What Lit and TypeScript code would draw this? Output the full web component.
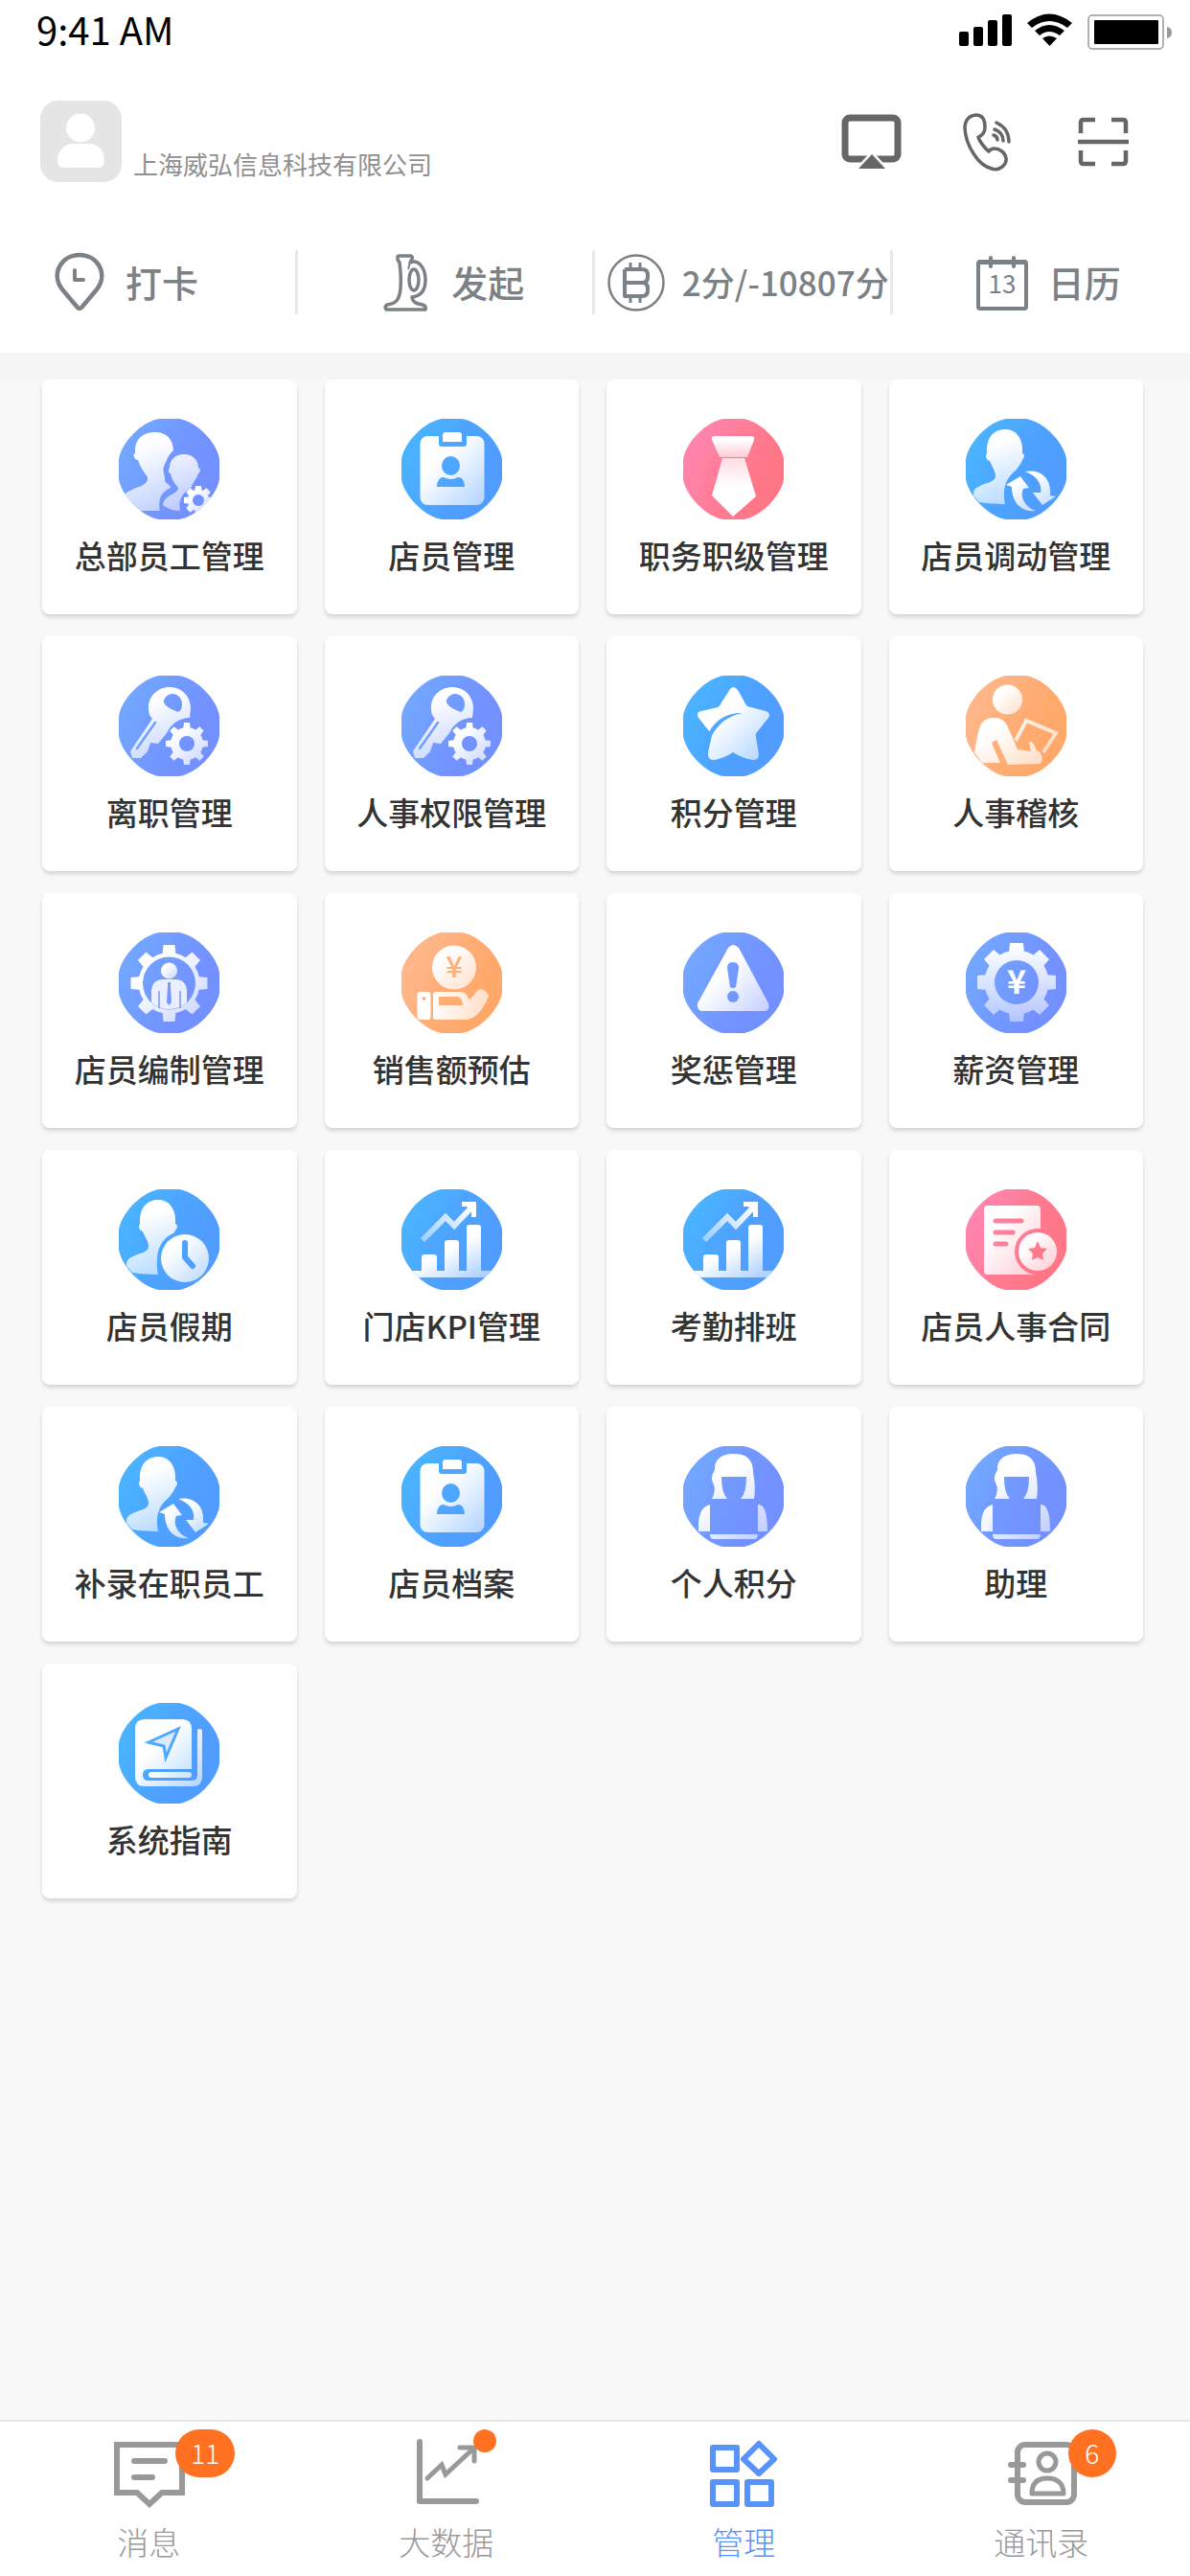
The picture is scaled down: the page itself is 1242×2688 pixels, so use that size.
import { LitElement, html, svg, css, nothing, type SVGTemplateResult } from "lit";
import { customElement, property } from "lit/decorators.js";

type Tone = "sky" | "indigo" | "pink" | "orange";
type Glyph =
  | "team" | "badge" | "tie" | "transfer" | "key" | "star" | "audit" | "staffing"
  | "coinHand" | "warning" | "payGear" | "leave" | "chart" | "contract" | "assistant" | "guide";

const TONES: Record<Tone, [string, string]> = {
  sky: ["#4ab2ff", "#509dff"],
  indigo: ["#72a6ff", "#7390ff"],
  pink: ["#ff85ad", "#ff7687"],
  orange: ["#ffb78a", "#ffa86b"],
};

/** Outline of a cog wheel centred on (cx, cy): a disc of radius `body` plus its teeth, as one path. */
function cog(cx: number, cy: number, body: number, tip: number, halfWidth: number, teeth = 8): string {
  const root = body - 3;
  let d = `M${cx - body} ${cy}A${body} ${body} 0 0 1 ${cx + body} ${cy}A${body} ${body} 0 0 1 ${cx - body} ${cy}Z`;
  for (let i = 0; i < teeth; i++) {
    const a = (i * 2 * Math.PI) / teeth - Math.PI / 2;
    const corners: [number, number][] = [
      [root, -halfWidth], [tip, -halfWidth + 1], [tip, halfWidth - 1], [root, halfWidth],
    ];
    const points = corners.map(([r, t]) => {
      const x = cx + r * Math.cos(a) - t * Math.sin(a);
      const y = cy + r * Math.sin(a) + t * Math.cos(a);
      return `${x.toFixed(2)} ${y.toFixed(2)}`;
    });
    d += `M${points.join("L")}Z`;
  }
  return d;
}

const person = svg`<path fill="url(#fg)" d="M41 11C52 11 58 19 59 30L59 36C62 37 61 41 59 43C57 48 54 51 52 54C44 60 37 71 41 89C31 89 20 88 14 87L8 80C8 75 9 73 13 71C21 66 31 67 31 59C31 55 28 51 25 44C21 43 20 38 22 36C21 21 28 11 41 11Z"/>`;

const GLYPHS: Record<Glyph, SVGTemplateResult> = {
  team: svg`
    <path fill="url(#fg)" d="M38 14C50 14 57 22 57 33C51 38 49 46 47 50C45 55 49 60 48 65C50 68 54 69 54 72C46 76 40 82 43 96L21 96L5 80C14 70 31 72 30 61C26 55 22 50 20 43C16 43 14 37 17 36C16 22 24 14 38 14Z"/>
    <path fill="url(#fg)" d="M68 37C77 37 83 43 83 51C86 52 85 56 83 57C81 63 77 67 76 71C69 76 61 83 64 96C57 96 51 94 46 90C47 79 62 79 62 72C58 67 55 63 54 57C52 57 51 53 53 51C53 43 59 37 68 37Z"/>
    <path fill="url(#own)" d=${cog(83, 85, 11, 15, 4)} />
    <circle cx="83" cy="85" r="6" fill="url(#bg)"/>`,
  badge: svg`
    <rect x="19.500" y="18" width="67" height="72" rx="8" fill="url(#fgDiag)"/>
    <path fill="url(#bg)" d="M39 16H68V26Q68 29 65 29H42Q39 29 39 26Z"/>
    <path fill="#fff" d="M43 24V17Q43 14 46 14H60Q63 14 63 17V24Z"/>
    <ellipse cx="51.500" cy="49" rx="9.500" ry="10" fill="url(#bg)"/>
    <path fill="url(#bg)" d="M37 71C37 66 39 61 44 61Q52 65 59 61C64 61 66 66 66 71Z"/>`,
  tie: svg`
    <path fill="url(#knot)" d="M33 18H71Q75 18 74 22L67 40H38L30 22Q29 18 33 18Z"/>
    <path fill="url(#blade)" d="M41 41H64L76 81L52 102L30 80Z"/>`,
  transfer: svg`${person}
    <path fill="url(#own)" d="M57 60L66 72L60 73C56 82 62 92 73 96C59 98 48 88 48 71L42 69Z"/>
    <path fill="url(#own)" d="M62 55C78 52 90 62 88 80L94 81L80 90L70 77L78 77C80 67 73 59 62 55Z"/>`,
  key: svg`
    <path fill="url(#fg)" d="M53 12C66 12 75 22 75 34L74 44C63 44 54 51 50 60L41 71L33 70L30 79L23 86L14 86L12 79L35 45C31 41 31 37 31 33C31 21 41 12 53 12Z"/>
    <path fill="url(#bg)" d="M47 26C48 22 52 19 56 19C62 19 66 24 66 30Q66 36 62 38C59 37 46 32 47 26Z"/>
    <path stroke="url(#bg)" stroke-width="2.500" stroke-linecap="round" d="M38 49L19 76"/>
    <path fill="url(#own)" d=${cog(71, 71, 17, 22, 4)} />
    <circle cx="71" cy="71" r="8" fill="url(#bg)"/>`,
  star: svg`
    <path fill="url(#fgDiag)" d="M49 14Q52 10 56 14C61 20 63 27 67 32L86 37Q92 39 89 44L77 59Q75 61 76 64L79 82Q79 88 73 88Q61 86 52 80Q43 86 32 88Q26 88 26 82C27 71 32 62 28 59L16 44Q13 38 19 37L36 33Q39 31 40 28Z"/>
    <path fill="url(#bg)" d="M62 39C46 38 33 47 27 59L28 67C34 52 46 42 62 39Z"/>`,
  audit: svg`
    <circle cx="43.500" cy="25" r="15.500" fill="url(#own)"/>
    <path fill="none" stroke="url(#fg)" stroke-width="4" d="M52 68L63 47L94 60L81 80"/>
    <path fill="url(#own)" d="M9 80C11 70 12 59 15 53C18 46 23 44 29 44C38 44 42 48 45 56L54 77L68 79C68 76 65 71 67 69C72 69 72 76 74 78C82 81 80 91 77 92L44 93L32 67L27 70L36 91H17Z"/>`,
  staffing: svg`
    <path fill="url(#own)" d=${cog(52.5, 53, 32, 40, 7)} />
    <circle cx="52.500" cy="53" r="27.500" fill="url(#bg)"/>
    <circle cx="52.500" cy="40" r="8.500" fill="url(#own)"/>
    <path fill="#fff" fill-opacity="0.850" d="M34 73V61Q35 49 46 49H59Q70 49 71 61V73Q64 80 52 80Q41 80 34 73Z"/>
    <path stroke="url(#bg)" stroke-width="1.500" d="M42 61V79M64 61V79"/>
    <path fill="url(#bg)" d="M51 52H54L54 56L55 73L52.500 76L50 73L51 56Z"/>`,
  coinHand: svg`
    <circle cx="55" cy="36.500" r="23" fill="url(#own)"/>
    <text x="55" y="47" class="yen" font-size="31" fill="#ffb07a">¥</text>
    <rect x="16.500" y="62" width="14" height="29" rx="3" fill="#fff"/>
    <circle cx="23.500" cy="69" r="2" fill="url(#bg)"/>
    <path fill="url(#fgSide)" d="M33 65Q33 62 36 62H62Q68 62 70 70C76 68 77 60 83 59Q90 61 91 67C87 76 79 91 67 91H36Q33 91 33 88Z"/>
    <path fill="url(#bg)" d="M39 67H58Q64 68 64 76H39Z"/>`,
  warning: svg`
    <path fill="url(#fgDiag)" d="M47 16Q52 10 58 16L89 74Q91 81 85 82H20Q14 81 15 74Z"/>
    <path fill="url(#bg)" d="M46 37Q46 31 52 31Q58 31 58 37L55 57Q52 59 49 57Z"/>
    <circle cx="52" cy="67" r="6" fill="url(#bg)"/>`,
  payGear: svg`
    <path fill="url(#fgDown)" d=${cog(53, 52, 33.5, 41, 8)} />
    <circle cx="53" cy="52" r="23" fill="url(#bg)"/>
    <text x="53" y="64" class="yen bold" font-size="34" fill="#fff">¥</text>`,
  leave: svg`${person}
    <circle cx="69" cy="72" r="29" fill="url(#bg)"/>
    <circle cx="69" cy="72" r="25" fill="url(#own)"/>
    <path fill="none" stroke="url(#bg)" stroke-width="6" stroke-linecap="round" stroke-linejoin="round" d="M69 56V71L77 80"/>`,
  chart: svg`
    <path fill="none" stroke="url(#trend)" stroke-width="6" d="M22 53L46 29L55 38L74 18"/>
    <path fill="#fff" d="M63 13H78V29H73V24L68 18H63Z"/>
    <path fill="url(#bar)" d="M10 85H21V71Q21 68 24 68H34Q37 68 37 71V85H45V56Q45 53 48 53H57Q60 53 60 56V85H68V40Q68 37 71 37H80Q83 37 83 40V85H95L88 92H17Z"/>`,
  contract: svg`
    <rect x="19" y="17" width="59" height="72" rx="4" fill="url(#own)"/>
    <path stroke="url(#bg)" stroke-width="5" stroke-linecap="round" d="M31 33H58M31 45H49M31 57H42"/>
    <circle cx="75" cy="65" r="24" fill="url(#bg)"/>
    <circle cx="75" cy="65" r="20" fill="url(#own)"/>
    <path fill="url(#bg)" d="M75 54L78 61L85 62L80 67L81 74L75 71L69 74L70 67L65 62L72 61Z"/>`,
  assistant: svg`
    <path fill="url(#hair)" d="M53 8C67 8 73 15 73 27Q76 42 74 55H60Q66 49 66 32H40Q40 49 46 55H30Q35 46 31 38Q28 32 33 25C32 14 41 8 53 8Z"/>
    <path fill="url(#fgDiag)" d="M28 61V89H16C16 77 16 64 28 61ZM78 61Q88 60 88 89H78ZM28 92H78Q78 97 74 97H32Q28 97 28 92Z"/>`,
  guide: svg`
    <path fill="url(#fgDiag)" d="M27 17H66Q76 17 76 27V69H31Q25 69 25 75Q25 81 31 81H76Q82 81 82 75V29Q82 27 84 27Q87 27 87 29V77Q87 87 77 87H27Q17 87 17 77V27Q17 17 27 17Z"/>
    <rect x="31" y="72" width="45" height="6" rx="3" fill="url(#fgSide)"/>
    <path fill="#dcebff" stroke="url(#bg)" stroke-width="3" d="M31 41L62 27L49 57L47 45Z"/>`,
};

@customElement("tile-icon")
export class TileIcon extends LitElement {
  static styles = css`
    :host { display: block; width: 105px; height: 105px; }
    .art { display: block; width: 100%; height: 100%; }
    .yen { font-family: "Noto Sans CJK SC", sans-serif; text-anchor: middle; }
    .bold { font-weight: 700; }
  `;

  @property() tone: Tone = "sky";
  @property() glyph: Glyph = "team";

  render() {
    const [from, to] = TONES[this.tone];
    return html`
      <svg class="art" viewBox="0 0 105 105" fill="none" aria-hidden="true">
        <defs>
          <linearGradient id="bg" gradientUnits="userSpaceOnUse" x1="10" y1="30" x2="85" y2="65">
            <stop offset="0" stop-color=${from} /><stop offset="1" stop-color=${to} />
          </linearGradient>
          <linearGradient id="fg" gradientUnits="userSpaceOnUse" x1="35" y1="25" x2="60" y2="100">
            <stop offset="0" stop-color="#fff" /><stop offset="1" stop-color="#fff" stop-opacity="0.500" />
          </linearGradient>
          <linearGradient id="own" x1="0.300" y1="0.250" x2="1" y2="1">
            <stop offset="0" stop-color="#fff" /><stop offset="1" stop-color="#fff" stop-opacity="0.600" />
          </linearGradient>
          <linearGradient id="fgDiag" gradientUnits="userSpaceOnUse" x1="42" y1="42" x2="88" y2="90">
            <stop offset="0" stop-color="#fff" /><stop offset="1" stop-color="#fff" stop-opacity="0.550" />
          </linearGradient>
          <linearGradient id="fgDown" gradientUnits="userSpaceOnUse" x1="52" y1="12" x2="52" y2="95">
            <stop offset="0" stop-color="#fff" /><stop offset="1" stop-color="#fff" stop-opacity="0.450" />
          </linearGradient>
          <linearGradient id="fgSide" gradientUnits="userSpaceOnUse" x1="32" y1="62" x2="95" y2="75">
            <stop offset="0" stop-color="#fff" /><stop offset="1" stop-color="#fff" stop-opacity="0.600" />
          </linearGradient>
          <linearGradient id="knot" x1="0" y1="0" x2="0" y2="1">
            <stop offset="0.200" stop-color="#fff" /><stop offset="1" stop-color="#fff" stop-opacity="0.600" />
          </linearGradient>
          <linearGradient id="blade" x1="0" y1="0" x2="0" y2="1">
            <stop offset="0" stop-color="#fff" stop-opacity="0.750" /><stop offset="0.500" stop-color="#fff" />
          </linearGradient>
          <linearGradient id="trend" gradientUnits="userSpaceOnUse" x1="22" y1="53" x2="74" y2="18">
            <stop offset="0" stop-color="#fff" stop-opacity="0.450" /><stop offset="1" stop-color="#fff" />
          </linearGradient>
          <linearGradient id="bar" gradientUnits="userSpaceOnUse" x1="40" y1="50" x2="66" y2="98">
            <stop offset="0.300" stop-color="#fff" /><stop offset="1" stop-color="#fff" stop-opacity="0.550" />
          </linearGradient>
          <linearGradient id="hair" gradientUnits="userSpaceOnUse" x1="50" y1="25" x2="64" y2="58">
            <stop offset="0" stop-color="#fff" /><stop offset="1" stop-color="#fff" stop-opacity="0.800" />
          </linearGradient>
          <clipPath id="disc">
            <path d="M42 0H63C81 3 102 24 105 42V63C102 81 81 102 63 105H42C24 102 3 81 0 63V42C3 24 24 3 42 0Z" />
          </clipPath>
        </defs>
        <g clip-path="url(#disc)">
          <rect width="105" height="105" fill="url(#bg)" />
          <circle cx="104" cy="76" r="82" fill=${to} fill-opacity="0.200" />
          ${GLYPHS[this.glyph]}
        </g>
      </svg>`;
  }
}

interface Tile { label: string; tone: Tone; glyph: Glyph; }

const TILES: Tile[] = [
  { label: "总部员工管理", tone: "indigo", glyph: "team" },
  { label: "店员管理", tone: "sky", glyph: "badge" },
  { label: "职务职级管理", tone: "pink", glyph: "tie" },
  { label: "店员调动管理", tone: "sky", glyph: "transfer" },
  { label: "离职管理", tone: "indigo", glyph: "key" },
  { label: "人事权限管理", tone: "indigo", glyph: "key" },
  { label: "积分管理", tone: "sky", glyph: "star" },
  { label: "人事稽核", tone: "orange", glyph: "audit" },
  { label: "店员编制管理", tone: "indigo", glyph: "staffing" },
  { label: "销售额预估", tone: "orange", glyph: "coinHand" },
  { label: "奖惩管理", tone: "indigo", glyph: "warning" },
  { label: "薪资管理", tone: "indigo", glyph: "payGear" },
  { label: "店员假期", tone: "sky", glyph: "leave" },
  { label: "门店KPI管理", tone: "sky", glyph: "chart" },
  { label: "考勤排班", tone: "sky", glyph: "chart" },
  { label: "店员人事合同", tone: "pink", glyph: "contract" },
  { label: "补录在职员工", tone: "sky", glyph: "transfer" },
  { label: "店员档案", tone: "sky", glyph: "badge" },
  { label: "个人积分", tone: "indigo", glyph: "assistant" },
  { label: "助理", tone: "indigo", glyph: "assistant" },
  { label: "系统指南", tone: "sky", glyph: "guide" },
];

const QUICK: { label: string; art: SVGTemplateResult }[] = [
  {
    label: "打卡",
    art: svg`<path stroke-width="4.500" stroke-linejoin="round" d="M28 56L12 37C-1 20 12 1 30 1S61 20 48 37L32 56Q30 58 28 56Z"/>
      <path stroke-width="4" stroke-linecap="round" stroke-linejoin="round" d="M25 17V27H34"/>`,
  },
  {
    label: "发起",
    art: svg`<path stroke-width="3.500" stroke-linejoin="round" d="M22 3Q22 2 24 2H36Q38 3 37 5L35 9C44 5 51 15 51 27C51 38 46 44 37 45C38 51 42 52 48 53Q52 54 51 58H10Q8 55 11 53C20 52 24 48 25 36C26 25 25 17 24 9L22 6Z"/>
      <ellipse cx="39" cy="27" rx="5" ry="11" stroke-width="3.500"/>
      <path stroke-width="2" d="M35 9L33 16"/>`,
  },
  {
    label: "2分/-10807分",
    art: svg`<circle cx="30" cy="30" r="28.500" stroke-width="2.500"/>
      <path stroke-width="4" stroke-linejoin="round" d="M18 16H36Q42 16 42 22V24Q42 30 36 30H18M36 30Q42 30 42 36V38Q42 44 36 44H18V16"/>
      <path stroke-width="3" d="M24 9V16M34 9V16M24 44V51M34 44V51"/>`,
  },
  {
    label: "日历",
    art: svg`<rect x="5" y="8" width="50" height="49" rx="2" stroke-width="4"/>
      <path stroke-width="5" d="M5 8.500H55"/>
      <path stroke-width="4" stroke-linecap="round" d="M18 4V13M42 4V13"/>
      <text class="day" x="30" y="41">13</text>`,
  },
];

interface Tab { label: string; badge?: string; dot?: boolean; active?: boolean; art: SVGTemplateResult; }

const TABS: Tab[] = [
  {
    label: "消息", badge: "11",
    art: svg`<path stroke-width="6" d="M3 6H71V56H50L37 68L24 56H3Z"/>
      <path stroke-width="6" stroke-linecap="round" d="M21 23H53M21 40H40"/>`,
  },
  {
    label: "大数据", dot: true,
    art: svg`<path stroke-width="6" stroke-linecap="round" stroke-linejoin="round" d="M8 3V65H67"/>
      <path stroke-width="5" stroke-linecap="round" d="M16 41L31 27L35 37L63 11M50 9H65V23"/>`,
  },
  {
    label: "管理", active: true,
    art: svg`<path stroke-width="6" stroke-linejoin="round" d="M4 9H29V32H4ZM4 45H29V68H4ZM40 45H65V68H40ZM52 5L68 21L52 36L36 21Z"/>`,
  },
  {
    label: "通讯录", badge: "6",
    art: svg`<rect x="11" y="6" width="59" height="60" rx="8" stroke-width="6"/>
      <circle cx="42" cy="24" r="9" stroke-width="5"/>
      <path stroke-width="5" stroke-linejoin="round" d="M26 57C26 46 32 41 42 41S59 46 59 57Z"/>
      <path stroke-width="6" stroke-linecap="round" d="M4 27H17M4 43H17"/>`,
  },
];

@customElement("app-root")
export class AppRoot extends LitElement {
  static styles = css`
    :host {
      display: flex;
      flex-direction: column;
      min-height: 100vh;
      background: #f8f8f8;
      font-family: "Noto Sans CJK SC", sans-serif;
      color: #333;
    }
    * { box-sizing: border-box; }
    a { color: inherit; text-decoration: none; }
    button { border: 0; padding: 0; background: none; font: inherit; color: inherit; }
    svg { display: block; flex: none; }

    .top { background: #fff; padding-bottom: 40px; }
    .status {
      display: flex;
      align-items: flex-start;
      justify-content: space-between;
      height: 64px;
      padding: 0 18px 0 38px;
      color: #000;
      font-size: 40px;
      line-height: 60px;
    }
    .signals { width: 224px; height: 40px; margin-top: 12px; }

    .profile {
      display: flex;
      align-items: center;
      padding: 41px 59px 0 42px;
    }
    .avatar { width: 85px; height: 85px; }
    .company {
      flex: 1;
      align-self: flex-end;
      margin: 0 0 0 12px;
      font-size: 26px;
      font-weight: 400;
      line-height: 38px;
      color: #8f8f8f;
    }
    .tools { display: flex; gap: 57px; color: #666; }
    .tool svg { width: 64px; height: 64px; }

    .quick { display: grid; grid-template-columns: repeat(4, 1fr); margin-top: 71px; }
    .action {
      display: flex;
      align-items: center;
      justify-content: center;
      gap: 18px;
      height: 67px;
      padding-left: 12px;
      border-right: 3px solid #e8e8e8;
      color: #7b8184;
      font-size: 38px;
      font-weight: 500;
      line-height: 40px;
      white-space: nowrap;
    }
    .action span { padding-bottom: 2px; }
    .action:first-child { justify-content: flex-start; padding-left: 53px; }
    .action:last-child { border-right: 0; }
    .action.long { font-size: 35px; }
    .action svg { width: 60px; height: 60px; }
    .day {
      font-size: 26px;
      font-weight: 400;
      fill: #7b8184;
      stroke: none;
      text-anchor: middle;
    }

    .strip { height: 28px; background: #f5f5f5; }
    .tiles {
      flex: 1;
      display: grid;
      grid-template-columns: repeat(4, 1fr);
      align-content: start;
      gap: 23px 29px;
      padding: 0 49px 23px 44px;
    }
    .tile {
      display: flex;
      flex-direction: column;
      align-items: center;
      gap: 12px;
      padding: 41px 0 37px;
      border-radius: 8px;
      background: #fff;
      box-shadow: 0 3px 4px rgba(0, 0, 0, 0.14);
      font-size: 33px;
      font-weight: 500;
      line-height: 50px;
      white-space: nowrap;
    }

    .tabs {
      display: grid;
      grid-template-columns: repeat(4, 1fr);
      border-top: 2px solid #e6e6e6;
      background: #fff;
      color: #999;
    }
    .tab {
      display: flex;
      flex-direction: column;
      align-items: center;
      gap: 15px;
      padding: 18px 0 16px;
      font-size: 33px;
      font-weight: 300;
      line-height: 40px;
    }
    .tab.active { color: #5793fb; }
    .mark { position: relative; }
    .mark svg { width: 72px; height: 72px; overflow: visible; }
    .badge, .dot {
      position: absolute;
      top: -10px;
      left: 64px;
      border-radius: 25px;
      background: #ff7020;
    }
    .badge {
      min-width: 50px;
      height: 50px;
      padding: 0 16px;
      color: #fff;
      font-size: 28px;
      line-height: 48px;
      text-align: center;
    }
    .dot { width: 24px; height: 24px; }
  `;

  render() {
    return html`
      <header class="top">
        <div class="status">
          <span>9:41 AM</span>
          <svg class="signals" viewBox="0 0 224 40" aria-hidden="true">
            <rect x="1" y="21" width="10" height="15" rx="2" />
            <rect x="16" y="16" width="10" height="20" rx="2" />
            <rect x="31" y="9" width="10" height="27" rx="2" />
            <rect x="46" y="3" width="10" height="33" rx="2" />
            <path d="M72 12Q95 -7 119 12L114 17Q95 3 77 17ZM80 20Q95 8 111 20L106 25Q95 17 85 25ZM88 28Q95 23 103 28L95.500 36Z" />
            <rect x="136" y="4" width="78" height="35" rx="4" fill="none" stroke="#999" stroke-width="1.500" />
            <rect x="142" y="9" width="67" height="25" rx="1" />
            <path d="M218 16Q223 17 223 22T218 28Z" fill="#999" />
          </svg>
        </div>

        <div class="profile">
          <svg class="avatar" viewBox="0 0 85 85" role="img" aria-label="头像">
            <rect width="85" height="85" rx="19" fill="#e5e5e5" />
            <circle cx="42" cy="28.500" r="15" fill="#fff" />
            <path fill="#fff" d="M18 62C18 52 26 45 34 45H51C60 45 67 52 67 62Q67 70 60 70H25Q18 70 18 62Z" />
          </svg>
          <h1 class="company">上海威弘信息科技有限公司</h1>
          <div class="tools">
            <button class="tool" aria-label="投屏">
              <svg viewBox="0 0 64 64" fill="none">
                <rect x="5" y="7" width="55" height="43" rx="5" stroke="currentColor" stroke-width="7" />
                <path d="M33 45L47 60H19Z" fill="currentColor" stroke="#fff" stroke-width="5" paint-order="stroke" />
              </svg>
            </button>
            <button class="tool" aria-label="电话">
              <svg viewBox="0 0 64 64" fill="none" stroke="currentColor" stroke-width="3.500" stroke-linecap="round">
                <path stroke-linejoin="round" d="M21 4C14 4 9 9 9 18C10 35 22 56 37 60C46 63 53 55 52 49C51 43 45 39 40 39Q36 39 34 42C30 39 24 31 23 27C28 25 30 21 30 17C30 9 27 4 21 4Z" />
                <path d="M42 12Q55 18 55 32M40 19Q49 22 49 31M39 25Q43 26 43 30" />
              </svg>
            </button>
            <button class="tool" aria-label="扫一扫">
              <svg viewBox="0 0 64 64" fill="none" stroke="currentColor" stroke-width="4.500">
                <path d="M9 23V12Q9 9 12 9H24M41 9H53Q56 9 56 12V23M56 41V52Q56 55 53 55H41M24 55H12Q9 55 9 52V41M6 32H59" />
              </svg>
            </button>
          </div>
        </div>

        <div class="quick">
          ${QUICK.map((q) => html`
            <button class="action ${q.label.length > 4 ? "long" : ""}">
              <svg viewBox="0 0 60 60" fill="none" stroke="currentColor" overflow="visible" aria-hidden="true">${q.art}</svg>
              <span>${q.label}</span>
            </button>`)}
        </div>
      </header>

      <div class="strip"></div>
      <main class="tiles">
        ${TILES.map((t) => html`
          <a class="tile" href="#">
            <tile-icon .tone=${t.tone} .glyph=${t.glyph}></tile-icon>
            <span>${t.label}</span>
          </a>`)}
      </main>

      <nav class="tabs">
        ${TABS.map((t) => html`
          <a class="tab ${t.active ? "active" : ""}" href="#" aria-current=${t.active ? "page" : nothing}>
            <span class="mark">
              <svg viewBox="0 0 72 72" fill="none" stroke="currentColor" aria-hidden="true">${t.art}</svg>
              ${t.badge ? html`<span class="badge">${t.badge}</span>` : nothing}
              ${t.dot ? html`<span class="dot"></span>` : nothing}
            </span>
            <span>${t.label}</span>
          </a>`)}
      </nav>`;
  }
}
